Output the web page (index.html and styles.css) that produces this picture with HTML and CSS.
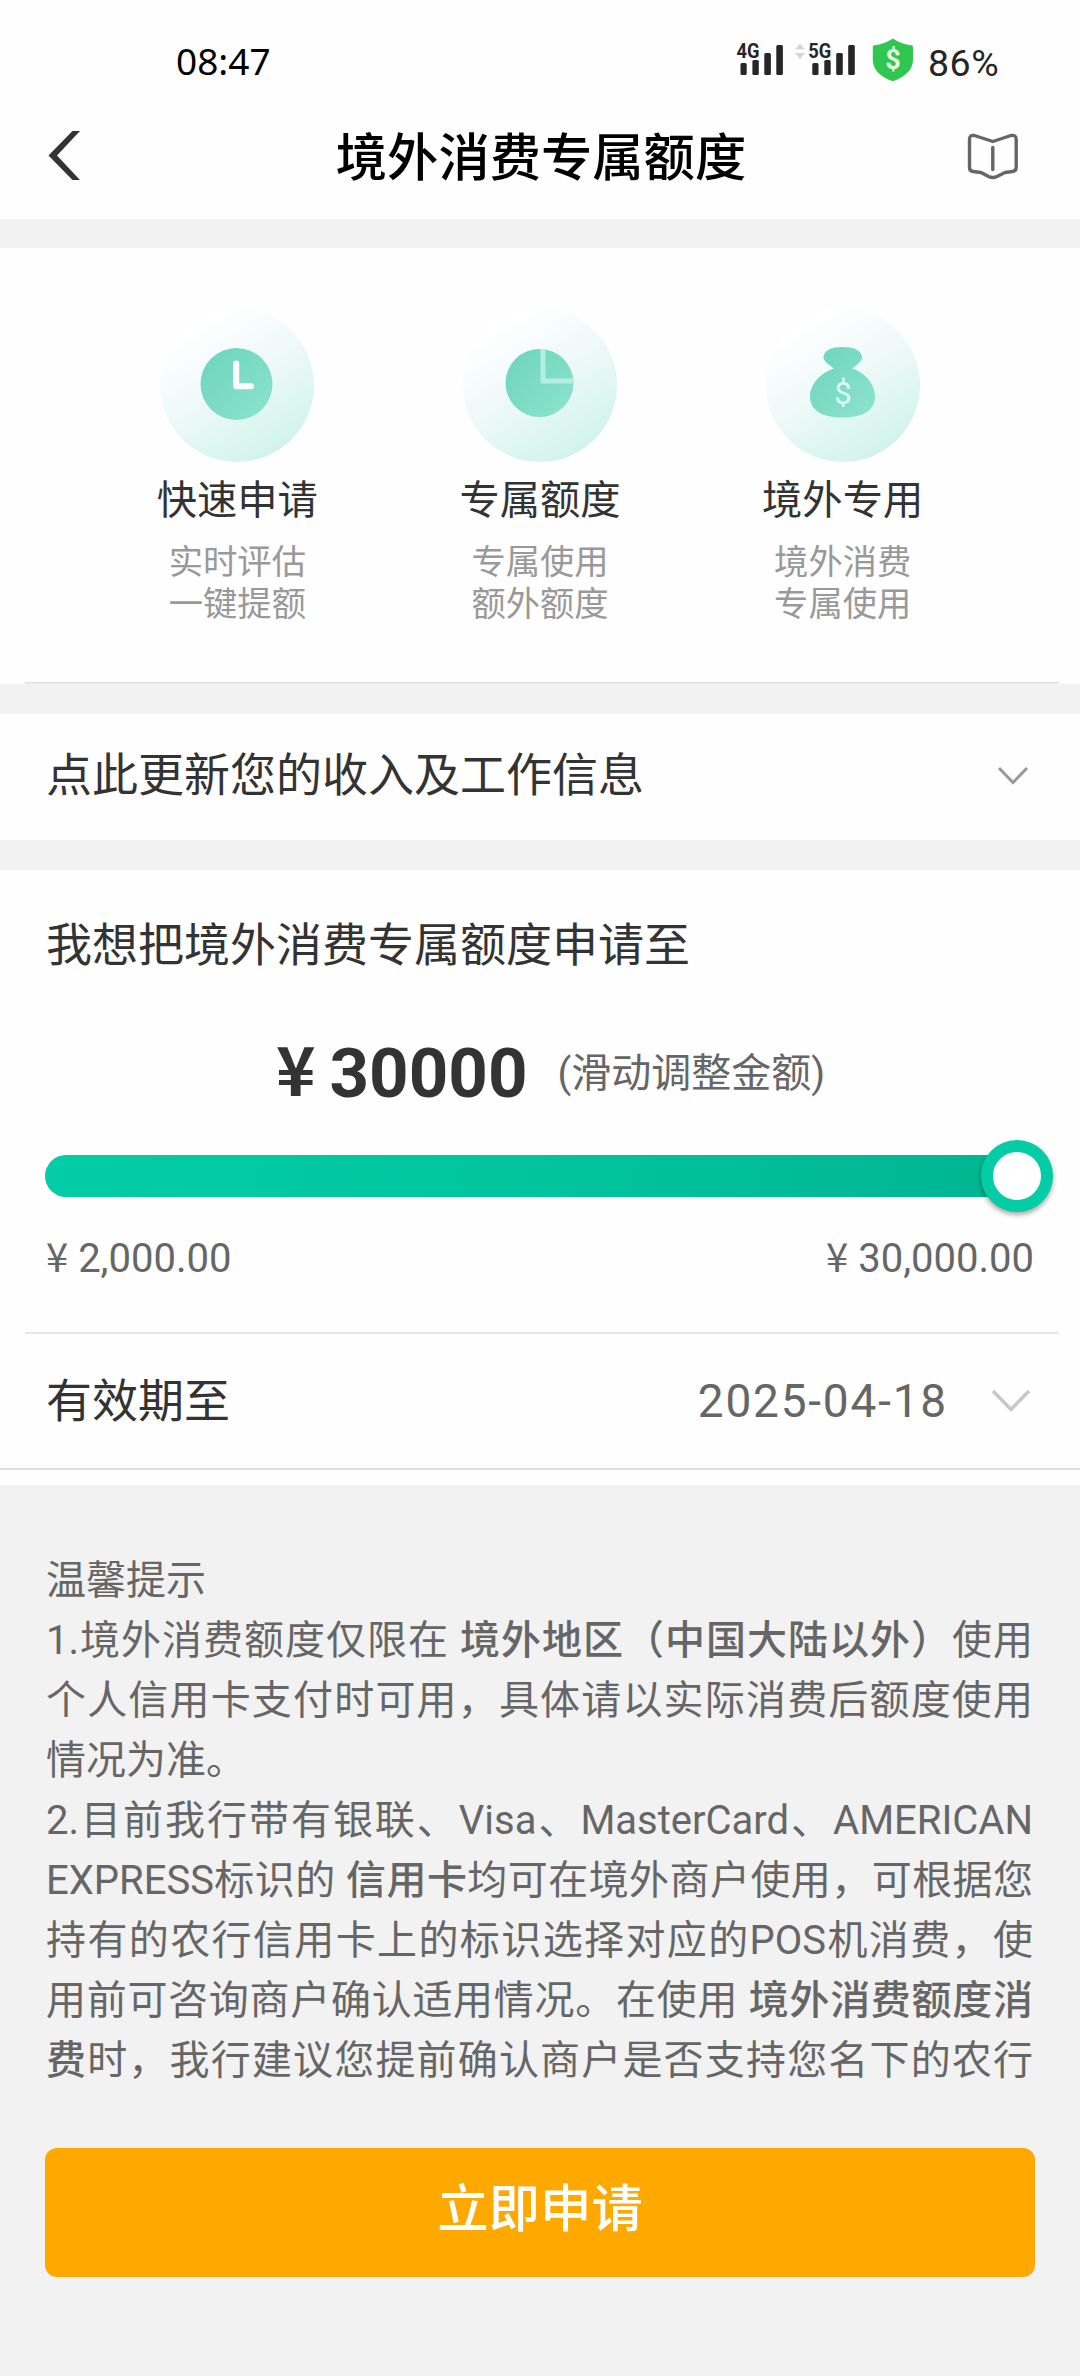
FILE: index.html
```html
<!DOCTYPE html>
<html lang="zh-CN">
<head>
<meta charset="utf-8">
<title>境外消费专属额度</title>
<link rel="stylesheet" href="styles.css">
</head>
<body>
<header class="statusbar">
  <span class="clock">08:47</span>
  <svg class="status-icons" width="180" height="50" viewBox="735 36 180 50">
    <g fill="#262626">
      <rect x="740.5" y="64" width="6.2" height="12" rx="1.5"/><rect x="752.4" y="61" width="6.4" height="15" rx="1.5"/><rect x="764.3" y="54" width="6.6" height="22" rx="1.5"/><rect x="776.3" y="46" width="6.6" height="30" rx="1.5"/>
      <rect x="812.3" y="64" width="6.2" height="12" rx="1.5"/><rect x="824.3" y="61" width="6.4" height="15" rx="1.5"/><rect x="836.2" y="54" width="6.6" height="22" rx="1.5"/><rect x="848.2" y="46" width="6.6" height="30" rx="1.5"/>
      <text class="net" x="736.6" y="59" textLength="23" lengthAdjust="spacingAndGlyphs">4G</text>
      <text class="net" x="808.2" y="59" textLength="23" lengthAdjust="spacingAndGlyphs">5G</text>
    </g>
    <path d="M795 50.500L800 44.500L805 50.500ZM795 54L800 60L805 54Z" fill="#d6d6d6"/>
    <path d="M892.900 39.500C898 43 905 45.500 911.500 46.300Q913 46.600 913 48V61C913 71 904 78.500 892.900 82.300C881.500 78.500 872.800 71 872.800 61V48Q872.800 46.600 874.300 46.300C881 45.500 887.500 43 892.900 39.500Z" fill="#30c750"/>
    <text class="dollar" x="892.900" y="70" text-anchor="middle">$</text>
  </svg>
  <span class="battery">86%</span>
</header>
<nav class="navbar">
  <svg class="back" width="36" height="52" viewBox="46 130 36 52"><path d="M72.500 131H80L57 155.500L80 180H72.500L48.500 155.500Z" fill="#333"/></svg>
  <h1 class="title">境外消费专属额度</h1>
  <svg class="book" width="54" height="50" viewBox="966 131 54 50" fill="none" stroke="#666" stroke-width="3.400" stroke-linecap="round" stroke-linejoin="round"><path d="M992.800 141.500L1011 135.500Q1016.200 134.500 1016.200 139.500V167.500Q1016.200 171 1012.500 171.500L1005 172.500L997 176.500Q992.800 178.500 988.600 176.500L981 172.500L973 171.500Q969.500 171 969.500 167.500V139.500Q969.500 134.500 974.500 135.500Z"/><path d="M992.800 147.500V169.500"/></svg>
</nav>
<section class="panel features">
  <div class="feature">
    <svg class="feature-icon" viewBox="0 0 154 154">
      <defs>
        <linearGradient id="halo" x1=".25" y1=".1" x2=".78" y2=".95"><stop offset="0" stop-color="#fff"/><stop offset=".45" stop-color="#eef9f8"/><stop offset="1" stop-color="#cff3ea"/></linearGradient>
        <linearGradient id="mint" x1="0" y1="0" x2="1" y2="1"><stop offset="0" stop-color="#6cd4bc"/><stop offset="1" stop-color="#8de3cf"/></linearGradient>
      </defs>
      <circle cx="77" cy="77" r="77" fill="url(#halo)"/>
      <circle cx="76.500" cy="76" r="36" fill="url(#mint)"/>
      <path d="M76.200 55.500V78.200H91" fill="none" stroke="#fff" stroke-width="6" stroke-linecap="round" stroke-linejoin="round"/>
    </svg>
    <h2>快速申请</h2>
    <p>实时评估<br>一键提额</p>
  </div>
  <div class="feature">
    <svg class="feature-icon" viewBox="0 0 154 154">
      <circle cx="77" cy="77" r="77" fill="url(#halo)"/>
      <circle cx="76.500" cy="75" r="34" fill="url(#mint)"/>
      <path d="M80 41V73H111" fill="none" stroke="#b4eee0" stroke-width="5"/>
    </svg>
    <h2>专属额度</h2>
    <p>专属使用<br>额外额度</p>
  </div>
  <div class="feature">
    <svg class="feature-icon" viewBox="0 0 154 154">
      <circle cx="77" cy="77" r="77" fill="url(#halo)"/>
      <path d="M68 60.500C62 56 57 53 57.500 48.500C58.500 42 66 39 76.500 39S95 42 96 48.500C96.500 53 92 56 86 60.500C99 64.500 109 76 109 88.500C109 103 96 109.500 76.500 109.500S44 103 44 88.500C44 76 55 64.500 68 60.500Z" fill="url(#mint)"/>
      <text class="bag-sign" x="77" y="95.500" text-anchor="middle">$</text>
    </svg>
    <h2>境外专用</h2>
    <p>境外消费<br>专属使用</p>
  </div>
</section>
<section class="panel row income">
  <span>点此更新您的收入及工作信息</span>
  <svg width="32" height="20" viewBox="0 0 32 20" fill="none" stroke="#999" stroke-width="3"><path d="M2 2L16 16.500L30 2"/></svg>
</section>
<section class="panel apply">
  <h3>我想把境外消费专属额度申请至</h3>
  <div class="amount"><span class="yen">¥</span><b>30000</b><span class="hint">(滑动调整金额)</span></div>
  <div class="slider"><div class="track"></div><div class="thumb"></div></div>
  <div class="range"><span><i>¥</i> 2,000.00</span><span><i>¥</i> 30,000.00</span></div>
  <div class="divider"></div>
  <div class="row expiry">
    <span>有效期至</span>
    <span class="date">2025-04-18</span>
    <svg width="40" height="24" viewBox="0 0 40 24" fill="none" stroke="#c8c8c8" stroke-width="3.500"><path d="M2 2L20 20.500L38 2"/></svg>
  </div>
</section>
<section class="tips">
  <p class="short">温馨提示</p>
  <p>1.境外消费额度仅限在 <b>境外地区（中国大陆以外）</b>使用</p>
  <p>个人信用卡支付时可用，具体请以实际消费后额度使用</p>
  <p class="short">情况为准。</p>
  <p>2.目前我行带有银联、Visa、MasterCard、AMERICAN</p>
  <p>EXPRESS标识的 <b>信用卡</b>均可在境外商户使用，可根据您</p>
  <p>持有的农行信用卡上的标识选择对应的POS机消费，使</p>
  <p>用前可咨询商户确认适用情况。在使用 <b>境外消费额度消</b></p>
  <p><b>费</b>时，我行建议您提前确认商户是否支持您名下的农行</p>
</section>
<button class="submit">立即申请</button>
</body>
</html>
```
FILE: styles.css
```css
* { box-sizing: border-box; margin: 0; padding: 0; }
body {
  width: 1080px;
  height: 2376px;
  overflow: hidden;
  background: #f2f2f2;
  color: #333;
  font-family: Roboto, "Noto Sans CJK SC", sans-serif;
  font-size: 46px;
}
svg { display: block; flex: none; }
.panel { background: #fefefe; }

.statusbar {
  display: flex;
  align-items: center;
  height: 93px;
  padding: 29px 0 0 176px;
  background: #fefefe;
}
.clock { flex: none; width: 559px; font: 37px/64px "Noto Sans", sans-serif; color: #000; }
.status-icons { margin-top: -2px; }
.battery { margin-left: 13px; font-size: 37.500px; line-height: 64px; letter-spacing: .5px; color: #262626; padding-top: 4px; }
.net { font: 700 21px Roboto, sans-serif; }
.dollar { font: 700 27px Roboto, sans-serif; fill: #e4fbe8; }

.navbar {
  display: flex;
  align-items: center;
  justify-content: space-between;
  height: 126px;
  padding: 0 60px 0 46px;
  background: #fefefe;
}
.back { margin-right: 34px; }
.title { font-size: 51.300px; line-height: 70px; font-weight: 500; color: #000; padding-top: 6px; }

.features {
  display: flex;
  height: 436px;
  margin-top: 29px;
  padding: 60px 86px 0;
  background: linear-gradient(#ddd, #ddd) 25px 434px / 1034px 1.500px no-repeat #fefefe;
}
.feature { flex: 1; text-align: center; }
.feature-icon { width: 154px; height: 154px; margin: 0 auto; }
.feature h2 { margin-top: 9px; font-size: 40.300px; line-height: 60px; font-weight: 400; }
.feature p { margin-top: 10px; font-size: 34.300px; line-height: 42px; color: #999; }
.bag-sign { font: 31px Roboto, sans-serif; fill: #e0faf4; }

.row { display: flex; align-items: center; justify-content: space-between; line-height: 60px; }
.income { height: 126px; margin-top: 30px; padding: 0 51px 4px 46px; }
.income svg { margin-top: 2px; }

.apply { height: 615px; margin-top: 30px; padding-top: 45px; }
.apply h3 { padding-left: 46px; font-size: 46px; line-height: 60px; font-weight: 400; }
.amount { display: flex; align-items: center; height: 80px; margin-top: 59px; padding-left: 276px; }
.amount b { margin-left: 14px; font-size: 69px; line-height: 80px; }
.yen { font: 700 67px/80px "Noto Sans CJK SC", sans-serif; margin-top: -15px; }
.hint { margin-left: 30px; font-size: 40px; line-height: 80px; color: #666; }
.slider { display: flex; align-items: center; height: 72px; margin: 26px 27px 0 45px; }
.track { flex: 1; height: 42px; border-radius: 21px 0 0 21px; background: linear-gradient(100deg, #03cda5, #00c59d 50%, #00b692); }
.thumb { width: 72px; height: 72px; margin-left: -12px; border: 12px solid #04cca4; border-radius: 50%; background: #fff; box-shadow: 0 3px 5px rgba(0, 0, 0, .35); }
.range { display: flex; justify-content: space-between; margin-top: 23px; padding: 0 46px; font-size: 40px; line-height: 48px; color: #666; }
.range i { font-family: "Noto Sans CJK SC", sans-serif; font-style: normal; line-height: 1; }
.divider { height: 2px; margin: 49px 21px 0 25px; background: #e6e6e6; }
.expiry { height: 136px; padding: 0 49px 0 46px; border-bottom: 2px solid #ddd; }
.date { margin-left: auto; margin-right: 43px; color: #666; letter-spacing: 1.800px; }

.tips { margin-top: 66px; padding: 0 47px 0 46px; font-size: 40px; line-height: 60px; color: #666; }
.tips p { text-align: justify; text-align-last: justify; white-space: nowrap; }
.tips .short { text-align-last: left; }
.tips b { font-weight: 500; }

.submit {
  display: block;
  width: 990px;
  height: 129px;
  margin: 57px 0 0 45px;
  padding-bottom: 6px;
  border: 0;
  border-radius: 12px;
  background: #ffa800;
  color: #fff;
  font: 500 51.400px/70px Roboto, "Noto Sans CJK SC", sans-serif;
}
```
